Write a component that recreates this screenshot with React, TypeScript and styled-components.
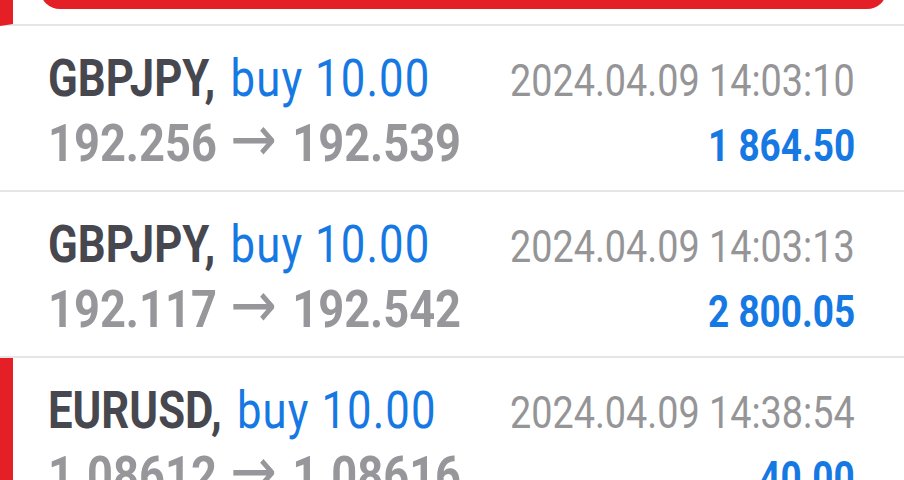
import React from 'react';
import styled, { createGlobalStyle } from 'styled-components';

const GlobalStyle = createGlobalStyle`
  html, body {
    margin: 0;
    padding: 0;
    background: #ffffff;
    font-family: Roboto, "Liberation Sans", Arial, sans-serif;
  }
`;

const RED = '#e41f25';
const BLUE = '#1679e3';

const List = styled.div`
  width: 904px;
  height: 480px;
  overflow: hidden;
  background: #ffffff;
`;

const TopItem = styled.div`
  display: flex;
  height: 24px;
  overflow: hidden;
  border-left: 13px solid ${RED};
  border-bottom: 2px solid #e6e6e6;
`;

const CloseButton = styled.div`
  flex: 1;
  height: 40px;
  margin: -31px 17px 0 27px;
  border-radius: 24px;
  background: ${RED};
`;

const Row = styled.div<{ $loss?: boolean }>`
  box-sizing: border-box;
  height: 166px;
  padding: 23px 49px 0 ${(p) => (p.$loss ? 35 : 48)}px;
  border-left: ${(p) => (p.$loss ? `13px solid ${RED}` : 'none')};
  border-bottom: 2px solid #e6e6e6;
`;

const Line = styled.div`
  display: flex;
  justify-content: space-between;
  align-items: baseline;
  height: 60px;
`;

const Narrow = styled.span<{ $right?: boolean; $scale?: number }>`
  display: inline-block;
  white-space: nowrap;
  min-width: 0;
  flex: ${(p) => (p.$right ? '0 0 auto' : '0 1 auto')};
  transform: scaleX(${(p) => p.$scale ?? 0.84});
  transform-origin: ${(p) => (p.$right ? 'right' : 'left')} center;
`;

const Title = styled(Narrow)`
  font-size: 52px;
  line-height: 60px;
  font-weight: 700;
  color: #47474f;
`;

const Side = styled.span`
  font-weight: 400;
  color: ${BLUE};
  margin-left: 4px;
  letter-spacing: 1.3px;
`;

const Prices = styled(Narrow)`
  font-size: 52px;
  line-height: 60px;
  font-weight: 700;
  color: #97979b;
`;

const Arrow = styled.span`
  font-family: "DejaVu Sans", sans-serif;
  font-weight: 400;
  font-size: 64px;
  margin: 0 18px 0 15px;
`;

const Time = styled(Narrow)`
  font-size: 44px;
  line-height: 52px;
  font-weight: 400;
  color: #959597;
`;

const Profit = styled(Narrow)`
  font-size: 44px;
  line-height: 52px;
  font-weight: 700;
  color: ${BLUE};
`;

type Deal = {
  symbol: string;
  side: string;
  open: string;
  close: string;
  time: string;
  profit: string;
  loss?: boolean;
};

const deals: Deal[] = [
  { symbol: 'GBPJPY', side: 'buy 10.00', open: '192.256', close: '192.539', time: '2024.04.09 14:03:10', profit: '1 864.50' },
  { symbol: 'GBPJPY', side: 'buy 10.00', open: '192.117', close: '192.542', time: '2024.04.09 14:03:13', profit: '2 800.05' },
  { symbol: 'EURUSD', side: 'buy 10.00', open: '1.08612', close: '1.08616', time: '2024.04.09 14:38:54', profit: '40.00', loss: true },
];

const App: React.FC = () => {
  return (
    <>
      <GlobalStyle />
      <List>
        <TopItem>
          <CloseButton />
        </TopItem>
        {deals.map((d, i) => (
          <Row key={i} $loss={d.loss}>
            <Line>
              <Title>
                {d.symbol},<Side> {d.side}</Side>
              </Title>
              <Time $right $scale={0.858}>{d.time}</Time>
            </Line>
            <Line>
              <Prices $scale={0.87}>
                {d.open}<Arrow>→</Arrow>{d.close}
              </Prices>
              <Profit $right>{d.profit}</Profit>
            </Line>
          </Row>
        ))}
      </List>
    </>
  );
};

export default App;
